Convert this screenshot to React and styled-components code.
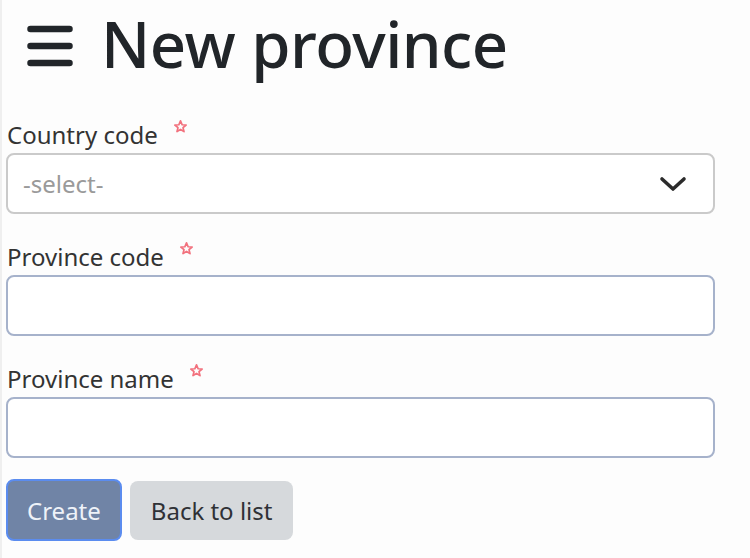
import React from "react";
import styled, { createGlobalStyle } from "styled-components";

const Global = createGlobalStyle`
  html, body { margin: 0; padding: 0; background: #fdfdfd; }
  body { font-family: "Noto Sans", "Open Sans", sans-serif; color: #212529; }
  * { box-sizing: border-box; }
`;

const Page = styled.div`
  width: 750px;
  height: 558px;
  padding: 0 35px 0 4px;
  border-left: 2px solid #efefef;
  display: flex;
  flex-direction: column;
`;

const Header = styled.div`
  display: flex;
  align-items: center;
  gap: 28px;
  height: 92px;
  padding-left: 21px;
`;

const Title = styled.h1`
  margin: 0;
  font-size: 63.5px;
  font-weight: 500;
  letter-spacing: -0.5px;
  color: #212529;
  line-height: 1;
  padding-bottom: 4px;
`;

const Form = styled.form`
  display: flex;
  flex-direction: column;
  margin-top: 21px;
`;

const Field = styled.div`
  display: flex;
  flex-direction: column;
  margin-bottom: 21px;
`;

const Label = styled.label`
  font-size: 24px;
  color: #333;
  display: flex;
  align-items: flex-start;
  gap: 15px;
  height: 40px;
  padding: 6px 0 0 1px;
  line-height: 1.3;
`;

const Star = styled.svg`
  width: 15px;
  height: 15px;
  margin-top: 0px;
`;

const Box = styled.div`
  height: 61px;
  border: 2px solid ${(p) => p.$border};
  border-radius: 8px;
  background: #fff;
  display: flex;
  align-items: center;
  justify-content: space-between;
  padding: 0 26px 0 15px;
  font-size: 24px;
  color: #9a9a9a;
`;

const Buttons = styled.div`
  display: flex;
  align-items: center;
  gap: 8px;
`;

const Button = styled.button`
  font-family: inherit;
  font-size: 24px;
  height: ${(p) => (p.$primary ? "62px" : "59px")};
  padding: 0 ${(p) => (p.$primary ? "19px" : "21px")};
  border-radius: 8px;
  border: ${(p) => (p.$primary ? "2px solid #5b8cef" : "none")};
  background: ${(p) => (p.$primary ? "#7084a6" : "#d6d9dc")};
  color: ${(p) => (p.$primary ? "#eef2f8" : "#2f3136")};
`;

const StarIcon = () => (
  <Star viewBox="0 0 24 24">
    <path
      d="M12 3 L14.6 9.2 L21 9.6 L16 13.8 L17.6 20.2 L12 16.7 L6.4 20.2 L8 13.8 L3 9.6 L9.4 9.2 Z"
      fill="none"
      stroke="#f2727e"
      strokeWidth="2.8"
      strokeLinejoin="round"
    />
  </Star>
);

const FieldRow = ({ label, border, children }) => (
  <Field>
    <Label>
      {label}
      <StarIcon />
    </Label>
    <Box $border={border}>{children}</Box>
  </Field>
);

export default function App() {
  return (
    <>
      <Global />
      <Page>
        <Header>
          <svg width="46" height="42" viewBox="0 0 46 42">
            <g stroke="#212529" strokeWidth="6.5" strokeLinecap="round">
              <line x1="3.5" y1="4" x2="42.5" y2="4" />
              <line x1="3.5" y1="21" x2="42.5" y2="21" />
              <line x1="3.5" y1="38" x2="42.5" y2="38" />
            </g>
          </svg>
          <Title>New province</Title>
        </Header>
        <Form>
          <FieldRow label="Country code" border="#cacaca">
            <span>-select-</span>
            <svg width="28" height="16" viewBox="0 0 28 16">
              <polyline
                points="3,3 14,13 25,3"
                fill="none"
                stroke="#2b2b2b"
                strokeWidth="3.6"
                strokeLinecap="round"
                strokeLinejoin="round"
              />
            </svg>
          </FieldRow>
          <FieldRow label="Province code" border="#a6b2cb" />
          <FieldRow label="Province name" border="#a6b2cb" />
          <Buttons>
            <Button type="button" $primary>Create</Button>
            <Button type="button">Back to list</Button>
          </Buttons>
        </Form>
      </Page>
    </>
  );
}
